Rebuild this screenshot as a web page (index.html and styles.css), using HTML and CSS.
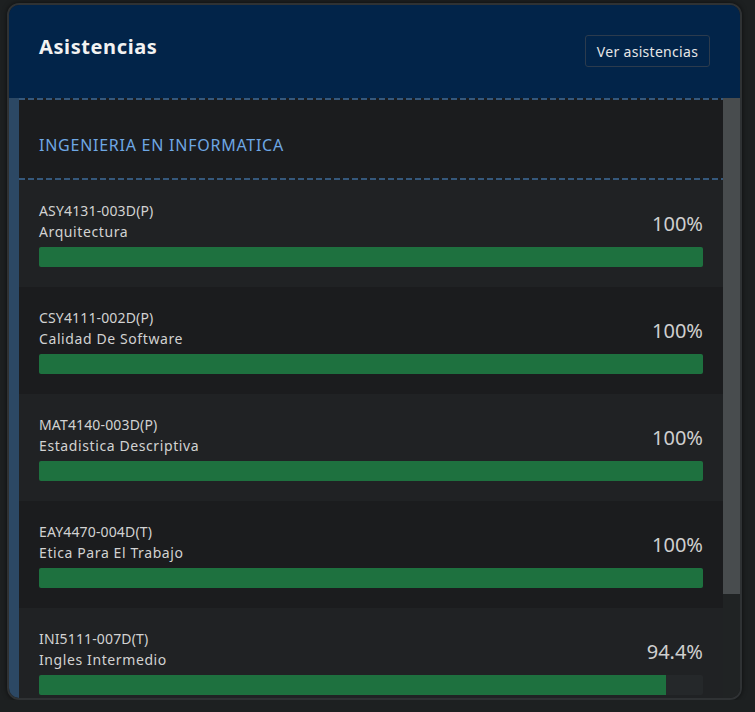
FILE: index.html
```html
<!DOCTYPE html>
<html lang="es">
<head>
<meta charset="utf-8">
<title>Asistencias</title>
<link rel="stylesheet" href="styles.css">
</head>
<body>
<div class="card">
  <div class="card-header">
    <h2 class="title">Asistencias</h2>
    <button class="btn">Ver asistencias</button>
  </div>
  <div class="card-body">
    <div class="scroll">
      <div class="section">INGENIERIA EN INFORMATICA</div>
      <div class="row odd">
        <div class="row-top">
          <div class="info"><div class="code">ASY4131-003D(P)</div><div class="name">Arquitectura</div></div>
          <div class="pct">100%</div>
        </div>
        <div class="bar"><div class="fill" style="width:100%"></div></div>
      </div>
      <div class="row even">
        <div class="row-top">
          <div class="info"><div class="code">CSY4111-002D(P)</div><div class="name">Calidad De Software</div></div>
          <div class="pct">100%</div>
        </div>
        <div class="bar"><div class="fill" style="width:100%"></div></div>
      </div>
      <div class="row odd">
        <div class="row-top">
          <div class="info"><div class="code">MAT4140-003D(P)</div><div class="name">Estadistica Descriptiva</div></div>
          <div class="pct">100%</div>
        </div>
        <div class="bar"><div class="fill" style="width:100%"></div></div>
      </div>
      <div class="row even">
        <div class="row-top">
          <div class="info"><div class="code">EAY4470-004D(T)</div><div class="name">Etica Para El Trabajo</div></div>
          <div class="pct">100%</div>
        </div>
        <div class="bar"><div class="fill" style="width:100%"></div></div>
      </div>
      <div class="row odd">
        <div class="row-top">
          <div class="info"><div class="code">INI5111-007D(T)</div><div class="name">Ingles Intermedio</div></div>
          <div class="pct">94.4%</div>
        </div>
        <div class="bar"><div class="fill" style="width:94.4%"></div></div>
      </div>
    </div>
    <div class="scrollbar"><div class="thumb"></div></div>
  </div>
</div>
</body>
</html>
```
FILE: styles.css
```css
html, body {
  margin: 0;
  background: #1d2021;
}
body {
  padding: 3px 13px 0 7px;
  font-family: "Noto Sans", "Open Sans", sans-serif;
  color: #d2d2d2;
}
.card {
  border: 2px solid #2f3234;
  border-radius: 12px;
  overflow: hidden;
  box-shadow: 0 0 5px rgba(0, 0, 0, 0.6);
  background: #1b1c1e;
}
.card-header {
  height: 93px;
  box-sizing: border-box;
  padding: 30px 30px 0 30px;
  background: #022449;
  display: flex;
  justify-content: space-between;
  align-items: flex-start;
}
.title {
  margin: 0;
  font-size: 20px;
  line-height: 24px;
  font-weight: 700;
  letter-spacing: 0.6px;
  color: #f2f2f2;
}
.btn {
  height: 32px;
  width: 125px;
  padding: 0;
  background: #022449;
  border: 1px solid #2c3b4d;
  border-radius: 3px;
  color: #e6e6e6;
  font-family: "Noto Sans", sans-serif;
  font-size: 14px;
  letter-spacing: 0.3px;
}
.card-body {
  height: 600px;
  display: flex;
}
.scroll {
  flex: 1;
  overflow: hidden;
  border-left: 10px solid #2c4864;
  background: #1b1c1e;
}
.scrollbar {
  width: 17px;
  background: #202324;
}
.thumb {
  height: 496px;
  background: #484c4e;
}
.section {
  height: 82px;
  box-sizing: border-box;
  padding: 12px 20px 0;
  display: flex;
  align-items: center;
  font-size: 16px;
  letter-spacing: 0.75px;
  color: #6ea7e4;
  background-color: #1b1c1e;
  background-image:
    repeating-linear-gradient(to right, #35587c 0 6px, transparent 6px 9px),
    repeating-linear-gradient(to right, #35587c 0 6px, transparent 6px 9px);
  background-size: 100% 2px, 100% 2px;
  background-position: 0 0, 0 100%;
  background-repeat: no-repeat;
}
.row {
  padding: 20px;
}
.row.odd { background: #202224; }
.row.even { background: #1b1c1e; }
.row-top {
  display: flex;
  justify-content: space-between;
  align-items: center;
}
.code, .name {
  font-size: 14px;
  line-height: 21px;
}
.code {
  letter-spacing: 0.15px;
}
.name {
  letter-spacing: 0.6px;
}
.pct {
  font-size: 20px;
  line-height: 24px;
  color: #cfcfcf;
  padding-top: 6px;
}
.bar {
  margin-top: 5px;
  height: 20px;
  background: #25282a;
  border-radius: 2px;
  overflow: hidden;
}
.fill {
  height: 100%;
  background: #1e713f;
}
```
